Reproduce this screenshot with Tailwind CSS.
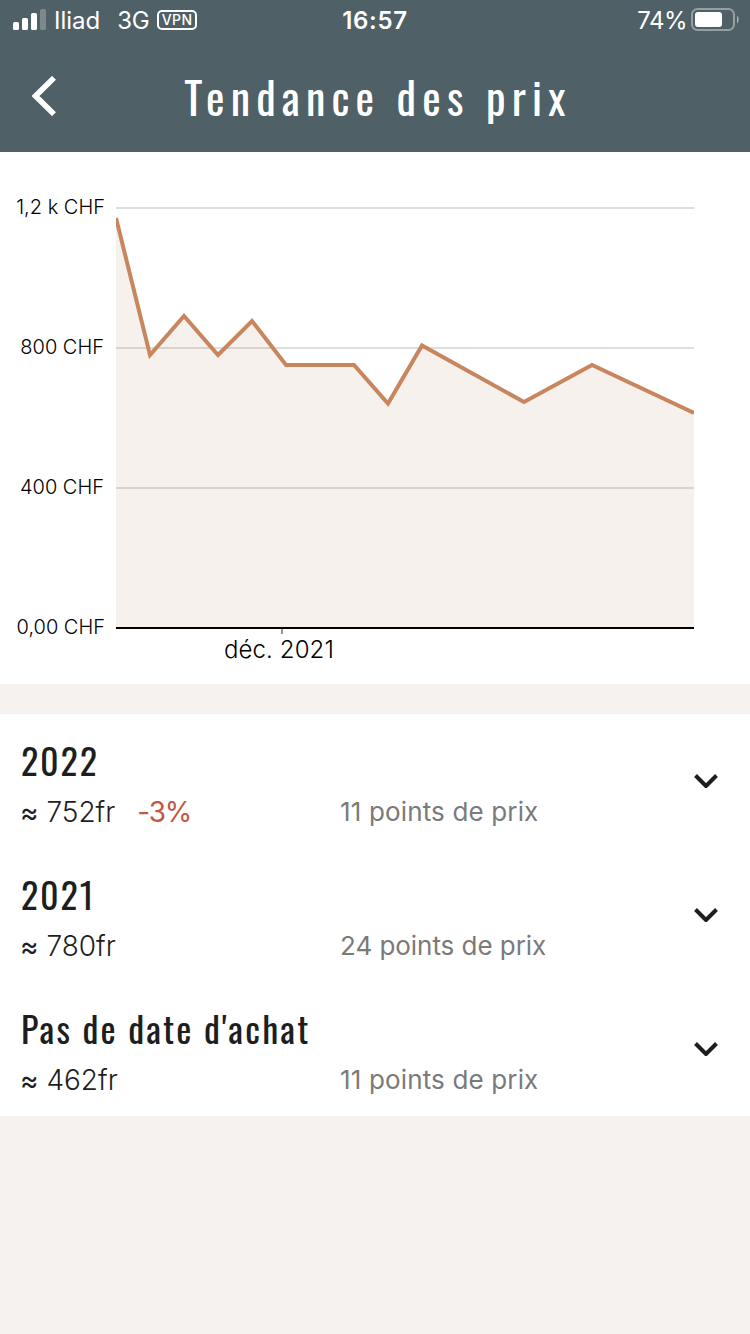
<!DOCTYPE html>
<html lang="fr">
  <head>
    <meta charset="UTF-8" />
    <meta name="viewport" content="width=device-width, initial-scale=1.0" />
    <script src="https://cdn.jsdelivr.net/npm/@tailwindcss/browser@4"></script>
    <title>Tendance des prix</title>
  </head>
  <body class="bg-[#f6f2ef] font-[Inter,sans-serif] text-[#1d1f1f]">
    <header class="h-[152px] bg-[#4f6066] text-white">
      <!-- status bar -->
      <div class="h-10 grid grid-cols-3 items-center text-2xl leading-9 whitespace-nowrap">
        <div class="flex items-center pl-[13px] pt-[2px]">
          <svg class="w-[33px] h-[21px] -mt-[3px]" viewBox="0 0 33 21" fill="currentColor">
            <rect x="0" y="13" width="6" height="8" rx="1.6" />
            <rect x="9" y="9" width="6" height="12" rx="1.6" />
            <rect x="18" y="4" width="6" height="17" rx="1.6" />
            <rect x="27" y="0" width="6" height="21" rx="1.6" opacity=".25" />
          </svg>
          <span class="ml-[8px]">Iliad</span>
          <span class="ml-[17px] tracking-[-0.4px]">3G</span>
          <span
            class="-mt-[2px] ml-[8px] w-10 h-5 border-2 rounded-[5px] text-[14px] leading-4 font-medium tracking-[0.5px] text-center"
            >VPN</span
          >
        </div>
        <p class="pt-[2px] text-center font-semibold tracking-[0.7px]">16:57</p>
        <div class="flex items-center justify-end pr-[11px] pt-[2px]">
          <span class="mr-[4px] tracking-[-0.5px]">74%</span>
          <svg class="w-12 h-[23px] -mt-[3px]" viewBox="0 0 48 23" fill="none">
            <rect x="1" y="1" width="42" height="21" rx="5.5" stroke="white" stroke-opacity=".4" stroke-width="2" />
            <rect x="4" y="4" width="27" height="15" rx="3" fill="white" />
            <path d="M46 7.5c2.2 1.4 2.2 6.600 0 8z" fill="white" fill-opacity=".5" />
          </svg>
        </div>
      </div>
      <!-- title bar -->
      <div class="h-28 grid grid-cols-[100px_1fr_100px] items-center">
        <svg class="w-6 h-10 ml-8" viewBox="0 0 24 40" fill="none" stroke="currentColor" stroke-width="5.5">
          <path d="M22 1.800 3.500 20 22 38.200" />
        </svg>
        <h1
          class="pl-[6px] pt-[1px] text-center whitespace-nowrap font-[Oswald,sans-serif] text-[44px] leading-[64px] tracking-[6.2px]"
        >
          Tendance des prix
        </h1>
      </div>
    </header>

    <section class="h-[532px] bg-white text-black">
      <div class="flex pt-[35px]">
        <div class="w-[116px] pr-[12px] text-right text-[20px] leading-10 font-light whitespace-nowrap">
          <p class="h-[140px] -mr-px">1,2 k CHF</p>
          <p class="h-[140px]">800 CHF</p>
          <p class="h-[140px]">400 CHF</p>
          <p class="h-10 -mr-px">0,00 CHF</p>
        </div>
        <svg class="w-[578px] h-[450px]" viewBox="116 187 578 450" fill="none">
          <path d="M116 208H694M116 348H694M116 488H694" stroke="#dedede" stroke-width="2" />
          <path
            d="M116 218 150 355 184 316 218 355 252 321 286 365H354L388 403.500 422 345.500 524 402 592 365 694 413V628H116z"
            fill="#a36845"
            fill-opacity=".09"
          />
          <path
            d="M116 218 150 355 184 316 218 355 252 321 286 365H354L388 403.500 422 345.500 524 402 592 365 694 413"
            stroke="#c8865e"
            stroke-width="4"
          />
          <path d="M282 629V634" stroke="#999" stroke-width="2" />
          <path d="M116 628H694" stroke="#000" stroke-width="2" />
        </svg>
      </div>
      <p class="pl-[224px] -mt-[13px] text-2xl leading-8 font-light tracking-[0.1px]">déc. 2021</p>
    </section>

    <ul class="mt-[30px] bg-white">
      <li class="h-[134px] pl-[21px] pr-8 flex items-center justify-between">
        <div class="h-full pt-[22px]">
          <h2 class="font-[Oswald,sans-serif] text-4xl leading-[48px] tracking-[1.9px]">2022</h2>
          <div class="mt-[10px] flex whitespace-nowrap text-[28px] leading-9">
            <p class="w-[319px] font-light">
              <span class="-ml-px font-normal">≈</span> 752fr<span
                class="ml-[22px] font-normal tracking-[-1.2px] text-[#bf5846]"
                >-3%</span
              >
            </p>
            <p class="text-[26px] tracking-[0.15px] text-[#7a7a7a]">11 points de prix</p>
          </div>
        </div>
        <svg class="w-6 h-4" viewBox="0 0 24 16" fill="none" stroke="#1d1f1f" stroke-width="4" stroke-linejoin="round">
          <path d="M1.500 2.500 12 13 22.500 2.500" />
        </svg>
      </li>
      <li class="h-[134px] pl-[21px] pr-8 flex items-center justify-between">
        <div class="h-full pt-[22px]">
          <h2 class="font-[Oswald,sans-serif] text-4xl leading-[48px] tracking-[1.9px]">2021</h2>
          <div class="mt-[10px] flex whitespace-nowrap text-[28px] leading-9">
            <p class="w-[319px] font-light"><span class="-ml-px font-normal">≈</span> 780fr</p>
            <p class="text-[26px] tracking-[-0.05px] text-[#7a7a7a]">24 points de prix</p>
          </div>
        </div>
        <svg class="w-6 h-4" viewBox="0 0 24 16" fill="none" stroke="#1d1f1f" stroke-width="4" stroke-linejoin="round">
          <path d="M1.500 2.500 12 13 22.500 2.500" />
        </svg>
      </li>
      <li class="h-[134px] pl-[21px] pr-8 flex items-center justify-between">
        <div class="h-full pt-[22px]">
          <h2 class="font-[Oswald,sans-serif] text-4xl leading-[48px] tracking-[2.15px]">Pas de date d'achat</h2>
          <div class="mt-[10px] flex whitespace-nowrap text-[28px] leading-9">
            <p class="w-[319px] font-light"><span class="-ml-px font-normal">≈</span> 462fr</p>
            <p class="text-[26px] tracking-[0.15px] text-[#7a7a7a]">11 points de prix</p>
          </div>
        </div>
        <svg class="w-6 h-4" viewBox="0 0 24 16" fill="none" stroke="#1d1f1f" stroke-width="4" stroke-linejoin="round">
          <path d="M1.500 2.500 12 13 22.500 2.500" />
        </svg>
      </li>
    </ul>
  </body>
</html>
